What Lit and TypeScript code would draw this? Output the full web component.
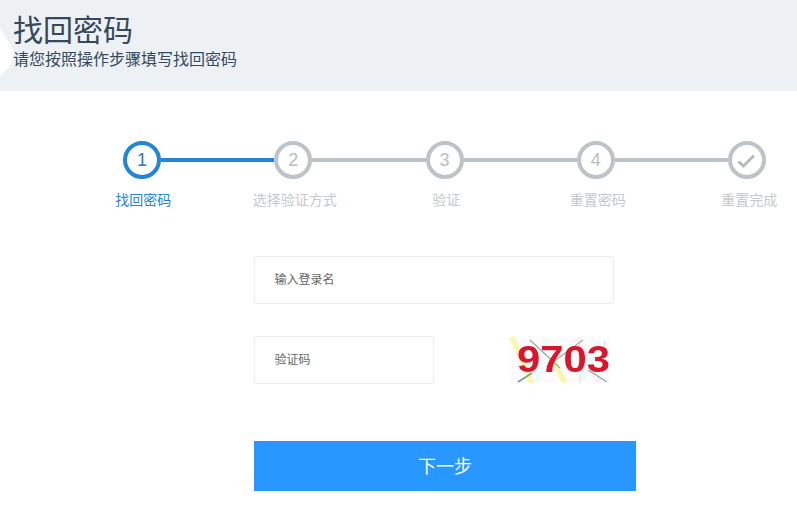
import { LitElement, html, css, svg } from 'lit';
import { customElement, property } from 'lit/decorators.js';

const STEPS = ['找回密码', '选择验证方式', '验证', '重置密码', '重置完成'];

@customElement('app-root')
export class AppRoot extends LitElement {
  @property({ type: Number }) activeStep: number = 0;

  static styles = css`
    :host {
      display: block;
      width: 797px;
      height: 521px;
      overflow: hidden;
      background: #ffffff;
      font-family: 'Liberation Sans', 'Noto Sans CJK SC', sans-serif;
    }

    .header {
      position: relative;
      height: 91px;
      box-sizing: border-box;
      padding: 12px 0 0 13px;
      background: #edf1f4;
      color: #36485c;
      overflow: hidden;
    }

    .header__notch {
      position: absolute;
      left: 0;
      top: 28px;
      width: 14px;
      height: 48px;
      background: #ffffff;
      clip-path: polygon(0 0, 45% 22%, 85% 38%, 100% 50%, 90% 68%, 55% 85%, 0 100%);
    }

    .header__title {
      position: relative;
      font-size: 30px;
      line-height: 38px;
      font-weight: 400;
      margin: 0;
    }

    .header__subtitle {
      position: relative;
      font-size: 16px;
      line-height: 20px;
      margin: 0;
    }

    .track {
      display: flex;
      align-items: center;
      padding: 50px 0 0 123px;
    }

    .circle {
      flex: none;
      display: flex;
      align-items: center;
      justify-content: center;
      width: 38px;
      height: 38px;
      box-sizing: border-box;
      border: 4px solid #bcc3c9;
      border-radius: 50%;
      color: #b6bdc4;
      font-size: 18px;
    }

    .circle.active {
      border-color: #2285d6;
      color: #2e77b8;
    }

    .line {
      flex: none;
      width: 113.25px;
      height: 4px;
      background: #bcc3c9;
    }

    .line.active {
      background: #2285d6;
    }

    .labels {
      display: grid;
      grid-template-columns: repeat(5, 151.5px);
      margin: 12px 0 0 67.5px;
    }

    .label {
      text-align: center;
      white-space: nowrap;
      font-size: 14px;
      line-height: 18px;
      color: #c3c9ce;
    }

    .label.active {
      color: #2285d6;
    }

    .form {
      display: flex;
      flex-direction: column;
      padding: 47px 0 0 254px;
    }

    .field {
      box-sizing: border-box;
      height: 48px;
      padding: 0 20px 0 19.5px;
      border: 1px solid #eeeeee;
      border-radius: 3px;
      font-size: 12px;
      line-height: 47px;
      color: #666666;
    }

    .field--name {
      width: 360px;
    }

    .field--code {
      width: 180px;
    }

    .code-row {
      display: flex;
      align-items: center;
      margin-top: 32px;
    }

    .captcha {
      margin-left: 73px;
      display: block;
    }

    .next {
      width: 382px;
      height: 50px;
      margin-top: 57px;
      background: #2897ff;
      color: #ffffff;
      font-size: 18px;
      line-height: 52px;
      text-align: center;
    }
  `;

  render() {
    return html`
      <div class="header">
        <div class="header__notch"></div>
        <h1 class="header__title">找回密码</h1>
        <p class="header__subtitle">请您按照操作步骤填写找回密码</p>
      </div>
      ${this.stepTrack}
      <div class="labels">
        ${STEPS.map(
          (step, i) =>
            html`<div class="label ${this.activeClass(i)}">${step}</div>`
        )}
      </div>
      <div class="form">
        <div class="field field--name">输入登录名</div>
        <div class="code-row">
          <div class="field field--code">验证码</div>
          ${this.captcha}
        </div>
        <div class="next">下一步</div>
      </div>
    `;
  }

  private get stepTrack() {
    return html`<div class="track">
      ${STEPS.map(
        (_, i) => html`
          <div class="circle ${this.activeClass(i)}">
            ${i === STEPS.length - 1 ? this.checkIcon : i + 1}
          </div>
          ${i < STEPS.length - 1
            ? html`<div class="line ${this.activeClass(i)}"></div>`
            : ''}
        `
      )}
    </div>`;
  }

  private get checkIcon() {
    return html`<svg width="20" height="16" viewBox="0 0 20 16">
      <path
        d="M1.5 9.5 L6.5 14 L17 3.5"
        fill="none"
        stroke="#b4bbc0"
        stroke-width="3"
      />
    </svg>`;
  }

  // noise behind the digits, read off the reference by eye
  private get captcha() {
    const noise = [
      ['M5 1 L25 47', '#fbf6a8', 5],
      ['M45 21 L58 47', '#fbf6a8', 5],
      ['M40 2 L30 46', '#f0fafd', 6],
      ['M70 2 L92 46', '#fdeff2', 7],
      ['M92 6 L76 44', '#eefbfb', 6],
      ['M23 4 L53 32', '#93b0a6', 1.3],
      ['M76 4 L46 26', '#9ab4ab', 1.3],
      ['M11 46 L25 37', '#7c9f90', 1.8],
      ['M81 34 L100 46', '#8fa9a0', 1.3],
      ['M98 4 L96 20', '#dfe0cf', 1.2],
      ['M73 39 L73 47', '#e0e3d0', 1.2],
    ] as const;
    return html`<svg class="captcha" width="106" height="48" viewBox="0 0 106 48">
      <defs>
        <filter id="soft"><feGaussianBlur stdDeviation="0.7" /></filter>
      </defs>
      <g filter="url(#soft)">
        <rect x="2" y="2" width="102" height="44" fill="#fdfbfc" />
        ${noise.map(
          ([d, color, width]) =>
            svg`<path d=${d} stroke=${color} stroke-width=${width} fill="none" />`
        )}
        <text
          x="10"
          y="36"
          font-family="'Liberation Sans'"
          font-weight="700"
          font-size="36"
          textLength="93"
          lengthAdjust="spacingAndGlyphs"
          fill="#d8142f"
        >9703</text>
      </g>
    </svg>`;
  }

  private activeClass(index: number): string {
    return index === this.activeStep ? 'active' : '';
  }
}
